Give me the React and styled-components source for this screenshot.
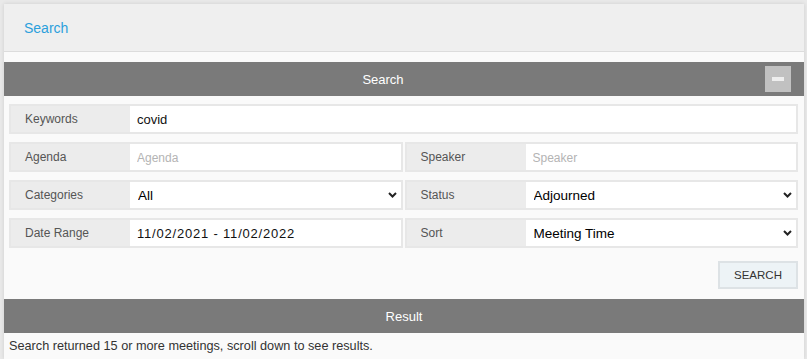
import styled, { createGlobalStyle } from 'styled-components'

const Global = createGlobalStyle`
  html, body {
    margin: 0;
    padding: 0;
    background: #e9e9e9;
    font-family: "Liberation Sans", Arial, sans-serif;
  }
`

const Page = styled.div`
  margin: 4px 3px 0 4px;
  background: #fafafa;
  box-shadow: 0 0 4px rgba(0, 0, 0, 0.12);
  height: 355px;
  overflow: hidden;
`

const Header = styled.div`
  height: 47px;
  background: #efefef;
  border-bottom: 1px solid #dcdcdc;
  display: flex;
  align-items: center;
  padding-left: 20px;
`

const HeaderLink = styled.a`
  color: #2ba0dc;
  font-size: 14px;
  text-decoration: none;
`

const Bar = styled.div`
  height: 34px;
  background: #7a7a7a;
  display: flex;
  align-items: center;
  margin-top: ${p => p.$top || 0}px;
`

const BarTitle = styled.div`
  flex: 1;
  text-align: center;
  color: #fff;
  font-size: 13px;
`

const Collapse = styled.button`
  width: 26px;
  height: 26px;
  margin: 0 13px 0 3px;
  padding: 0;
  border: none;
  background: #c1c1c1;
  display: flex;
  align-items: center;
  justify-content: center;
  &::after {
    content: '';
    width: 12px;
    height: 4px;
    background: #eeeeee;
  }
`

const Form = styled.div`
  padding: 8px 6px 0 5px;
  display: flex;
  flex-direction: column;
  gap: 8px;
`

const Pair = styled.div`
  display: grid;
  grid-template-columns: 1fr 1fr;
  gap: 2px;
`

const Field = styled.div`
  display: flex;
  height: 30px;
  box-sizing: border-box;
  border: 2px solid #e7e7e7;
  background: #ececec;
`

const Label = styled.div`
  width: 119px;
  flex: none;
  display: flex;
  align-items: center;
  padding-left: 14px;
  box-sizing: border-box;
  font-size: 12px;
  color: #555;
`

const Input = styled.input`
  flex: 1;
  min-width: 0;
  border: none;
  outline: none;
  background: #fff;
  padding: 0 7px;
  font-family: "Liberation Sans", Arial, sans-serif;
  font-size: 13px;
  color: #111;
  letter-spacing: ${p => (p.$spaced ? '0.8px' : '0')};
  &::placeholder {
    color: #b4b4b4;
    font-size: 12px;
  }
`

const SelectBox = styled.div`
  flex: 1;
  position: relative;
  background: #fff;
  display: flex;
`

const Select = styled.select`
  flex: 1;
  appearance: none;
  border: none;
  outline: none;
  background: transparent;
  padding: 0 8px;
  font-family: "Liberation Sans", Arial, sans-serif;
  font-size: 13.5px;
  color: #000;
`

const Chevron = styled.svg`
  position: absolute;
  right: 4px;
  top: 50%;
  margin-top: -3px;
  pointer-events: none;
`

const Actions = styled.div`
  display: flex;
  justify-content: flex-end;
  padding: 13px 6px 0 0;
`

const SearchButton = styled.button`
  width: 80px;
  height: 28px;
  box-sizing: border-box;
  border: 2px solid #dde2e5;
  background: #edf3f6;
  font-family: "Liberation Sans", Arial, sans-serif;
  font-size: 11.5px;
  color: #333;
  padding: 0;
`

const Message = styled.div`
  padding: 6px 5px;
  font-size: 12.7px;
  color: #333;
`

const Dropdown = ({ value }) => (
  <SelectBox>
    <Select defaultValue={value}>
      <option>{value}</option>
    </Select>
    <Chevron width="9" height="6" viewBox="0 0 9 6">
      <path d="M1 1l3.5 3.5L8 1" fill="none" stroke="#222" strokeWidth="2" />
    </Chevron>
  </SelectBox>
)

const App = () => {
  return (
    <>
      <Global />
      <Page>
        <Header>
          <HeaderLink href="#">Search</HeaderLink>
        </Header>
        <Bar $top={10}>
          <BarTitle>Search</BarTitle>
          <Collapse />
        </Bar>
        <Form>
          <Field>
            <Label>Keywords</Label>
            <Input defaultValue="covid" />
          </Field>
          <Pair>
            <Field>
              <Label>Agenda</Label>
              <Input placeholder="Agenda" />
            </Field>
            <Field>
              <Label>Speaker</Label>
              <Input placeholder="Speaker" />
            </Field>
          </Pair>
          <Pair>
            <Field>
              <Label>Categories</Label>
              <Dropdown value="All" />
            </Field>
            <Field>
              <Label>Status</Label>
              <Dropdown value="Adjourned" />
            </Field>
          </Pair>
          <Pair>
            <Field>
              <Label>Date Range</Label>
              <Input $spaced defaultValue="11/02/2021 - 11/02/2022" />
            </Field>
            <Field>
              <Label>Sort</Label>
              <Dropdown value="Meeting Time" />
            </Field>
          </Pair>
        </Form>
        <Actions>
          <SearchButton>SEARCH</SearchButton>
        </Actions>
        <Bar $top={10}>
          <BarTitle>Result</BarTitle>
        </Bar>
        <Message>Search returned 15 or more meetings, scroll down to see results.</Message>
      </Page>
    </>
  )
}

export default App
